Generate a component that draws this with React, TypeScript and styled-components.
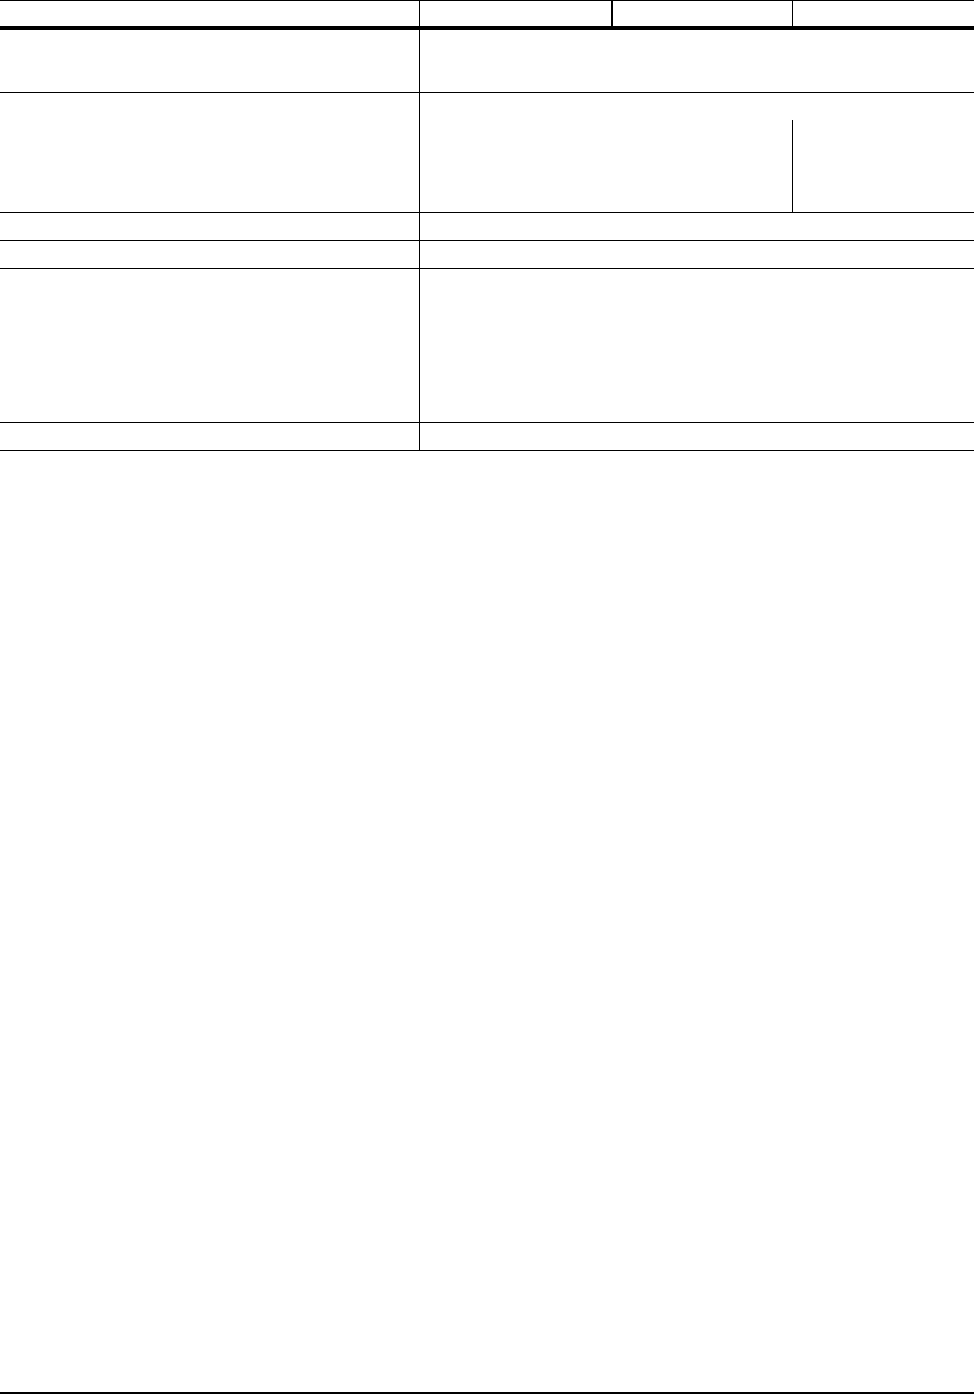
import styled, { createGlobalStyle } from "styled-components"

const GlobalStyle = createGlobalStyle`
  html, body {
    margin: 0;
    padding: 0;
    background: #fff;
    font-family: "Liberation Sans", Arial, sans-serif;
  }
`

interface RowSpec {
  height: number
  split?: boolean
}

const rows: RowSpec[] = [
  { height: 62 },
  { height: 119, split: true },
  { height: 27 },
  { height: 27 },
  { height: 153 },
  { height: 27 }
]

const App = () => {
  return (
    <Page>
      <GlobalStyle />
      <Table>
        <HeadRow>
          <HeadCell $width={419} $rule={1} />
          <HeadCell $width={191} $rule={2} />
          <HeadCell $width={179} $rule={1} />
          <HeadCell $rule={0} />
        </HeadRow>
        {rows.map((row, i) => (
          <BodyRow key={i} $height={row.height}>
            <LabelCell />
            <ValueCell>
              {row.split && (
                <>
                  <SubTop />
                  <SubGrid>
                    <SubCell />
                    <SubCell $divider />
                  </SubGrid>
                </>
              )}
            </ValueCell>
          </BodyRow>
        ))}
      </Table>
      <FooterRule />
    </Page>
  )
}

const Page = styled.div`
  min-height: 1394px;
  display: flex;
  flex-direction: column;
`

const Table = styled.div`
  display: flex;
  flex-direction: column;
  border-top: 1px solid #000;
`

const HeadRow = styled.div`
  display: flex;
  height: 25px;
  border-bottom: 4px solid #000;
`

const HeadCell = styled.div<{ $width?: number; $rule: number }>`
  width: ${(p) => (p.$width ? `${p.$width}px` : "auto")};
  flex: ${(p) => (p.$width ? "0 0 auto" : "1 1 auto")};
  border-right: ${(p) => p.$rule}px solid #000;
`

const BodyRow = styled.div<{ $height: number }>`
  display: grid;
  grid-template-columns: 420px 1fr;
  height: ${(p) => p.$height}px;
  border-bottom: 1px solid #000;
`

const LabelCell = styled.div`
  border-right: 1px solid #000;
`

const ValueCell = styled.div`
  display: flex;
  flex-direction: column;
`

const SubTop = styled.div`
  height: 27px;
`

const SubGrid = styled.div`
  flex: 1;
  display: grid;
  grid-template-columns: 372px 1fr;
`

const SubCell = styled.div<{ $divider?: boolean }>`
  border-left: ${(p) => (p.$divider ? "1px solid #000" : "none")};
`

const FooterRule = styled.div`
  margin-top: auto;
  height: 2px;
  background: #000;
`

export default App
